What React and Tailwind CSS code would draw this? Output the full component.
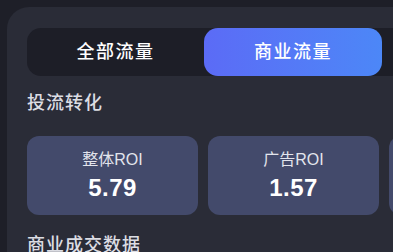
export default function App() {
  const font = { fontFamily: '"Liberation Sans", "Noto Sans CJK SC", sans-serif' };
  const cards = [
    { label: "整体ROI", value: "5.79" },
    { label: "广告ROI", value: "1.57" },
    { label: "自然ROI", value: "4.22" },
  ];
  return (
    <div className="w-[393px] h-[252px] overflow-hidden bg-[#1e1f28] pt-[7px] pl-[7px]" style={font}>
      <div className="h-[260px] w-[420px] rounded-tl-[22px] bg-[#2a2c37] pl-[20px] pt-[21px] flex flex-col">
        <div className="flex h-[48px] w-[420px] rounded-[14px] bg-[#1d1e27]">
          <div className="w-[177px] flex items-center justify-center text-[18px] tracking-[1.5px] font-medium text-white">全部流量</div>
          <div className="w-[178px] flex items-center justify-center rounded-[14px] bg-gradient-to-r from-[#5b6bf6] to-[#4c87f7] text-[18px] tracking-[1.5px] font-medium text-white">商业流量</div>
        </div>
        <div className="mt-[15px] text-[18px] tracking-[1px] leading-6 text-[#dcdde3] font-medium">投流转化</div>
        <div className="mt-[21px] flex gap-[10px]">
          {cards.map((c) => (
            <div key={c.label} className="w-[171px] h-[79px] shrink-0 rounded-[12px] bg-[#434a6b] flex flex-col items-center pt-[13px]">
              <div className="text-[16px] leading-[22px] text-[#e2e4ec]">{c.label}</div>
              <div className="mt-[2px] text-[24px] leading-[30px] tracking-[0.5px] font-bold text-white">{c.value}</div>
            </div>
          ))}
        </div>
        <div className="mt-[18px] text-[18px] tracking-[1px] leading-6 text-[#dcdde3] font-medium">商业成交数据</div>
      </div>
    </div>
  );
}
